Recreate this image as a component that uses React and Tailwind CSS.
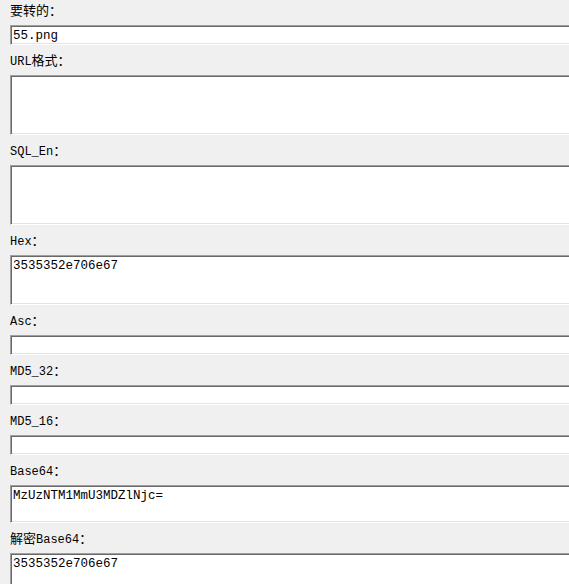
const cjk = 'text-[13px]';

const fields = [
  { label: <><span className={cjk}>要转的：</span></>, h: 'h-[20px]', value: '55.png', first: true },
  { label: <>URL<span className={cjk}>格式：</span></>, h: 'h-[60px]', value: '' },
  { label: <>SQL_En<span className={cjk}>：</span></>, h: 'h-[60px]', value: '' },
  { label: <>Hex<span className={cjk}>：</span></>, h: 'h-[50px]', value: '3535352e706e67' },
  { label: <>Asc<span className={cjk}>：</span></>, h: 'h-[20px]', value: '' },
  { label: <>MD5_32<span className={cjk}>：</span></>, h: 'h-[20px]', value: '' },
  { label: <>MD5_16<span className={cjk}>：</span></>, h: 'h-[20px]', value: '' },
  { label: <>Base64<span className={cjk}>：</span></>, h: 'h-[38px]', value: 'MzUzNTM1MmU3MDZlNjc=' },
  { label: <><span className={cjk}>解密</span>Base64<span className={cjk}>：</span></>, h: 'h-[60px]', value: '3535352e706e67' },
];

function Field({ field }) {
  return (
    <div className="flex flex-col">
      <div
        className={`${field.first ? 'h-[24px]' : 'h-[30px]'} flex items-end pb-[6px] pl-[10px] text-[12px] leading-[14px] text-black`}
      >
        <span>{field.label}</span>
      </div>
      <div
        className={`${field.h} ml-[10px] w-[600px] shrink-0 border border-t-[#a0a0a0] border-l-[#a0a0a0] border-b-white border-r-white bg-white shadow-[inset_1px_1px_0_#696969,inset_-1px_-1px_0_#e3e3e3] pl-[2px] pt-[3px] text-[12.5px] leading-[15px] text-black`}
      >
        {field.value}
      </div>
    </div>
  );
}

export default function App() {
  return (
    <div
      className="w-[569px] h-[584px] overflow-hidden bg-[#f0f0f0]"
      style={{ fontFamily: '"Liberation Mono", "Noto Sans CJK SC", monospace' }}
    >
      <div className="h-px" />
      {fields.map((f, i) => (
        <Field key={i} field={f} />
      ))}
    </div>
  );
}
